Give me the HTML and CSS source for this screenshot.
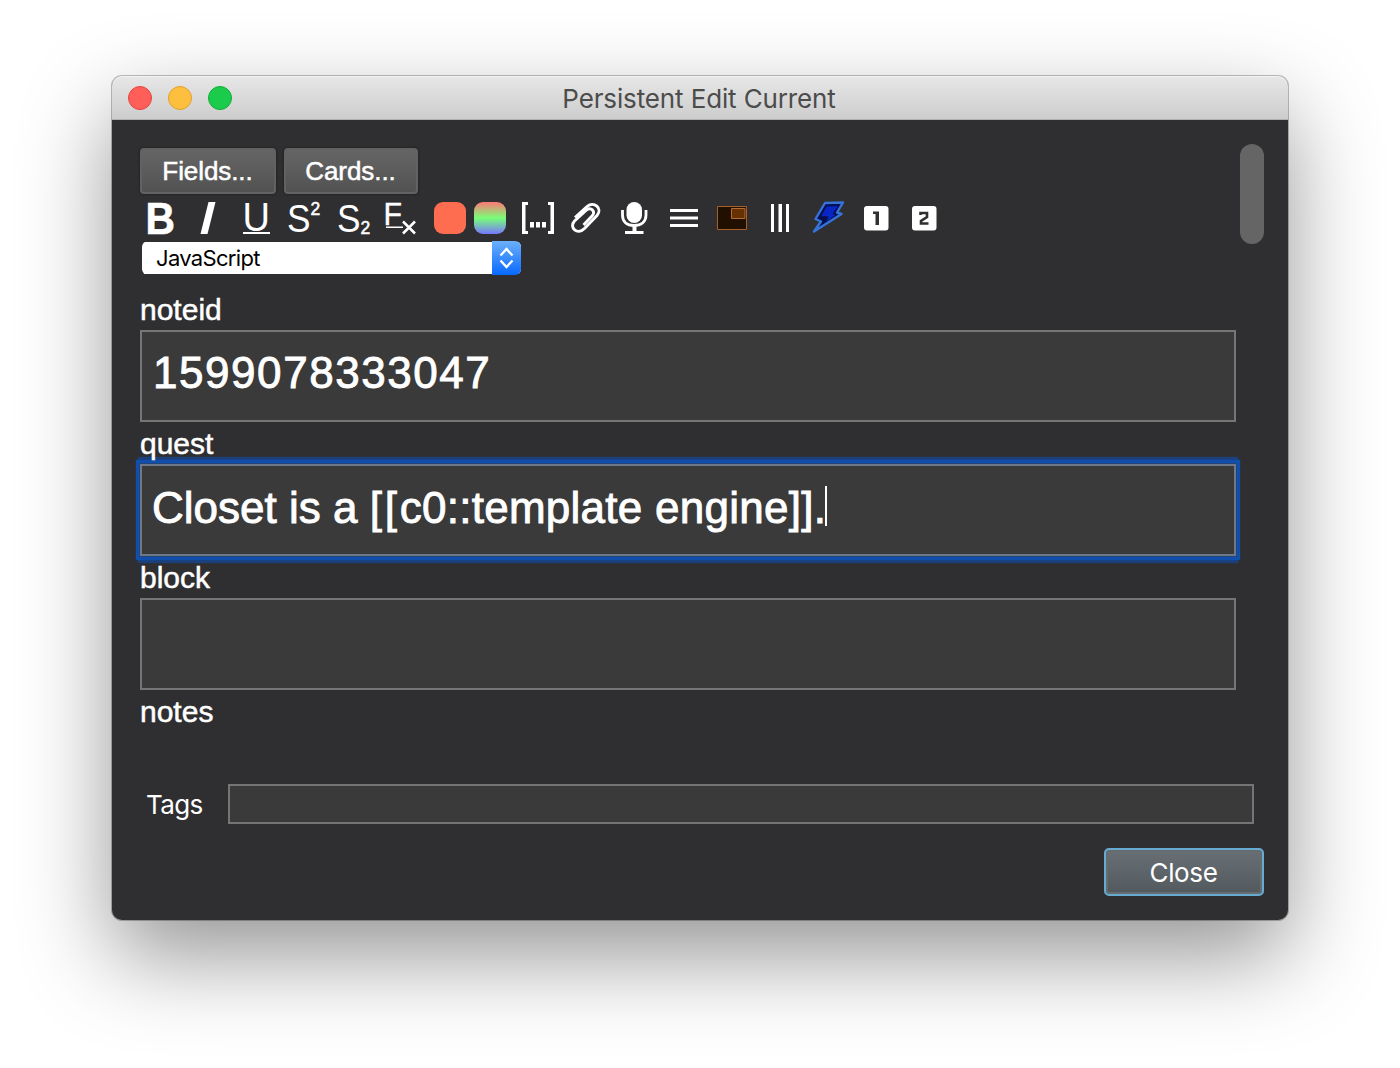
FILE: index.html
```html
<!DOCTYPE html>
<html lang="en">
<head>
<meta charset="utf-8">
<title>Persistent Edit Current</title>
<link rel="stylesheet" href="styles.css">
</head>
<body>
<main class="window">
  <header class="titlebar">
    <div class="lights"><span class="light red"></span><span class="light amber"></span><span class="light green"></span></div>
    <h1 class="title">Persistent Edit Current</h1>
  </header>
  <div class="content">
    <section class="editor">
      <div class="actions">
        <button class="btn fields-btn"><span>Fields...</span></button>
        <button class="btn cards-btn"><span>Cards...</span></button>
      </div>
      <div class="toolbar">
        <svg class="icon" viewBox="0 0 32 32"><text x="1.500" y="31.500" font-size="44" font-weight="700" textLength="29.500" lengthAdjust="spacingAndGlyphs" stroke="#fff" stroke-width=".6">B</text></svg>
        <svg class="icon" viewBox="0 0 32 32"><path d="M16.5 0H23.5L15.5 32H8.500Z"/></svg>
        <svg class="icon" viewBox="0 0 32 32"><text x="2.500" y="28.500" font-size="40" textLength="27.500" lengthAdjust="spacingAndGlyphs">U</text><path d="M3 30h27v2H3z"/></svg>
        <svg class="icon" viewBox="0 0 32 32"><text x="-1" y="29.500" font-size="39" textLength="23.500" lengthAdjust="spacingAndGlyphs">S</text><text x="22.500" y="13" font-size="17.500" stroke="#fff" stroke-width=".5">2</text></svg>
        <svg class="icon" viewBox="0 0 32 32"><text x="1" y="29.500" font-size="39" textLength="23.500" lengthAdjust="spacingAndGlyphs">S</text><text x="24.500" y="32" font-size="17.500" stroke="#fff" stroke-width=".5">2</text></svg>
        <svg class="icon" viewBox="0 0 32 32"><text x="-0.500" y="23" font-size="32" textLength="18.500" lengthAdjust="spacingAndGlyphs" stroke="#fff" stroke-width=".4">F</text><path d="M2 24.500h17v1.500H2z"/><path class="line" stroke-width="2.500" d="M19 19.500 31 31.500M31 19.500 19 31.500"/></svg>
        <span class="swatch coral"></span>
        <span class="swatch rainbow"></span>
        <svg class="icon" viewBox="0 0 32 32"><path d="M0 0h6v3H3.500v26H6v3H0zM32 0h-6v3h2.500v26H26v3h6zM8 20h4v5.500H8zM14 20h4v5.500h-4zM20 20h4v5.500h-4z"/></svg>
        <svg class="icon" viewBox="0 0 32 32"><path class="line" stroke-width="2.900" d="M5 15.500 17 4.500c7-6 16 2 10 9L14.500 26.500C7.500 33.500-1.500 25.500 4.500 19L16 8.500c5-4.500 10 1 6 5.500L13.500 23"/></svg>
        <svg class="icon" viewBox="0 0 32 32"><rect x="8.500" y="0" width="15.500" height="21" rx="7.750"/><path class="line" stroke-width="2.800" d="M4.500 8v5c0 7 4.500 10.500 11.500 10.500S28 20 28 13V8"/><path d="M14.500 23h4v6h7v3H7v-3h7.500z"/></svg>
        <svg class="icon gap-small" viewBox="0 0 32 32"><path d="M2 7h28v3H2zM2 14.500h28v3H2zM2 22h28v3H2z"/></svg>
        <svg class="icon" viewBox="0 0 32 32"><path d="M1.500 4.500h29v23h-29z" fill="#210f00" stroke="#a45f2b"/><path d="M15.500 6.500H29v10H15.500z" fill="#673000" stroke="#b56c30"/></svg>
        <svg class="icon" viewBox="0 0 32 32"><path d="M7 2h3v28H7zM14.500 2h3.500v28h-3.500zM22 2h3v28h-3z"/></svg>
        <svg class="icon" viewBox="0 0 32 32"><path d="M13 1 31 .5 25 10.500l4.500 1.500L2 29.500 9 19.500 3.500 17Z" fill="#061050" stroke="#3573da" stroke-width="2.400" stroke-linejoin="round"/><path d="M14.500 4.500 26 4l-5.500 8 3 1-9 6.500 2-5-7-.5z" fill="#0726c4"/></svg>
        <svg class="icon" viewBox="0 0 32 32"><rect x="4" y="4" width="24.500" height="24.500" rx="3"/><path d="M13 9.500h6V23h-3.500V12H13z" fill="#303032"/></svg>
        <svg class="icon" viewBox="0 0 32 32"><rect x="4" y="4" width="24.500" height="24.500" rx="3"/><path d="M12.500 13v-2h6.500v4l-6 4v2.500h7.500" fill="none" stroke="#303032" stroke-width="2.600"/></svg>
      </div>
      <div class="select"><span class="select-text">JavaScript</span><span class="stepper"><svg viewBox="0 0 29 34"><path class="line" stroke-width="2.300" d="m8.500 14.500 6-6.500 6 6.500M8.500 19.500l6 6.500 6-6.500"/></svg></span></div>
      <label class="label first">noteid</label>
      <div class="field"><span class="digits">1599078333047</span></div>
      <label class="label">quest</label>
      <div class="field focused"><span>Closet is a </span><span class="brackets">[[</span><span class="cloze">c0::template engine]].</span><span class="caret"></span></div>
      <label class="label">block</label>
      <div class="field"></div>
      <label class="label">notes</label>
    </section>
    <div class="scrollbar"></div>
    <div class="tags"><label class="tags-label">Tags</label><div class="tags-input"></div></div>
    <footer class="footer"><button class="close"><span>Close</span></button></footer>
  </div>
</main>
</body>
</html>
```
FILE: styles.css
```css
* { box-sizing: border-box; }
body {
  margin: 0;
  height: 1068px;
  padding: 76px 112px;
  overflow: hidden;
  background: #fff;
  color: #fff;
  font-family: "Liberation Sans", Arial, sans-serif;
}
button { margin: 0; padding: 0; color: #fff; font-family: inherit; }
.window {
  height: 844px;
  border-radius: 10px;
  background: #2f2f31;
  box-shadow: 0 0 0 1px rgba(0,0,0,.25), 0 36px 90px rgba(0,0,0,.42);
}
.titlebar {
  height: 44px;
  display: grid;
  grid-template-columns: 120px 1fr 120px;
  align-items: center;
  padding: 0 16px;
  border-radius: 10px 10px 0 0;
  border-bottom: 1px solid #b0b0b0;
  background: linear-gradient(#e7e7e7, #cdcdcd);
  box-shadow: inset 0 1px 0 #f4f4f4;
}
.lights { display: flex; gap: 16px; }
.light { width: 24px; height: 24px; border-radius: 50%; border: 1px solid; }
.red { background: #ff5f58; border-color: #e2463f; }
.amber { background: #ffbf3e; border-color: #e0a02e; }
.green { background: #1bcc4c; border-color: #12ac32; }
.title {
  margin: 2px 0 0;
  padding-right: 2px;
  text-align: center;
  white-space: nowrap;
  color: #4c4c4c;
  font: 400 26px/32px Inter, sans-serif;
  letter-spacing: -.13px;
}
.content {
  height: 800px;
  display: grid;
  grid-template-columns: 1096px 24px;
  grid-template-rows: 612px 40px 48px;
  column-gap: 4px;
  row-gap: 24px;
  padding: 28px 24px 24px 28px;
}
.editor { height: 612px; display: flex; flex-direction: column; }
.actions { display: flex; gap: 8px; }
.btn {
  height: 46px;
  border: 2px solid #626262;
  border-radius: 4px;
  background: linear-gradient(#656565, #525252);
  box-shadow: 0 0 3px rgba(0,0,0,.45);
  font-size: 26px;
  letter-spacing: -.08px;
  -webkit-text-stroke: .5px #fff;
}
.btn span { margin-right: 1px; }
.fields-btn { width: 136px; }
.cards-btn { width: 134px; }
.toolbar { height: 32px; margin: 8px 0 0 4px; display: flex; gap: 16px; }
.icon { width: 32px; height: 32px; flex: none; overflow: visible; fill: #fff; }
.gap-small { margin-left: 2px; }
.line { fill: none; stroke: #fff; }
.swatch { width: 32px; height: 32px; border-radius: 9px; flex: none; }
.coral { margin-left: 2px; background: #ff6d51; }
.rainbow { margin-left: -8px; background: linear-gradient(#ff7777, #77ff77 50%, #7777ff); }
.select {
  width: 379px;
  height: 34px;
  margin: 7px 0 0 2px;
  display: flex;
  justify-content: space-between;
  border-radius: 6px;
  background: linear-gradient(#2f2f31 1px, #fff 1px 33px, #2f2f31 33px);
}
.select-text { padding-left: 14px; color: #000; font: 22px/35px Inter, sans-serif; letter-spacing: -.68px; }
.stepper { width: 29px; height: 34px; border-radius: 0 6px 6px 0; background: linear-gradient(#6cb0fb, #0869ff); }
.stepper svg { display: block; width: 29px; height: 34px; }
.label {
  position: relative;
  z-index: 1;
  height: 42px;
  padding-top: 5px;
  font-size: 30px;
  line-height: 34px;
  -webkit-text-stroke: .5px #fff;
}
.first { margin-top: 13px; }
.field {
  height: 92px;
  flex: none;
  display: flex;
  align-items: flex-start;
  padding: 17px 10px;
  border: 2px solid #757575;
  background: #3a3a3a;
  font-size: 44px;
  line-height: 50px;
  white-space: pre;
  -webkit-text-stroke: .9px #fff;
}
.focused {
  border-color: #6d7889;
  box-shadow: 0 0 0 1px #244477, 0 0 0 3px #104fae, 0 0 1px 4px #104fae, 0 -5px 1px 2px #1c407b, 0 5px 1px 2px #1c407b;
}
.digits { margin: -1px 0 0 1px; letter-spacing: 1.560px; }
.brackets { letter-spacing: 2.800px; }
.cloze { letter-spacing: .26px; }
.caret { width: 2px; height: 40px; margin: 3px 0 0 -1px; background: #fff; }
.scrollbar { width: 24px; height: 100px; margin-top: -4px; border-radius: 12px; background: #656565; }
.tags, .footer { grid-column: 1 / -1; }
.tags { display: grid; grid-template-columns: 88px 1026px; grid-template-rows: 40px; }
.tags-label { padding: 1px 0 0 6px; font: 26px/40px Inter, sans-serif; letter-spacing: -.6px; }
.tags-input { border: 2px solid #757575; background: #3a3a3a; }
.footer { display: flex; justify-content: flex-end; }
.close {
  width: 160px;
  height: 48px;
  border: 2px solid #67abd2;
  border-radius: 5px;
  background: linear-gradient(#687075, #535a5e);
  box-shadow: inset 0 0 0 2px #666d71;
  font: 26px Inter, sans-serif;
  letter-spacing: -.35px;
}
.close span { margin-right: 1px; }
```
